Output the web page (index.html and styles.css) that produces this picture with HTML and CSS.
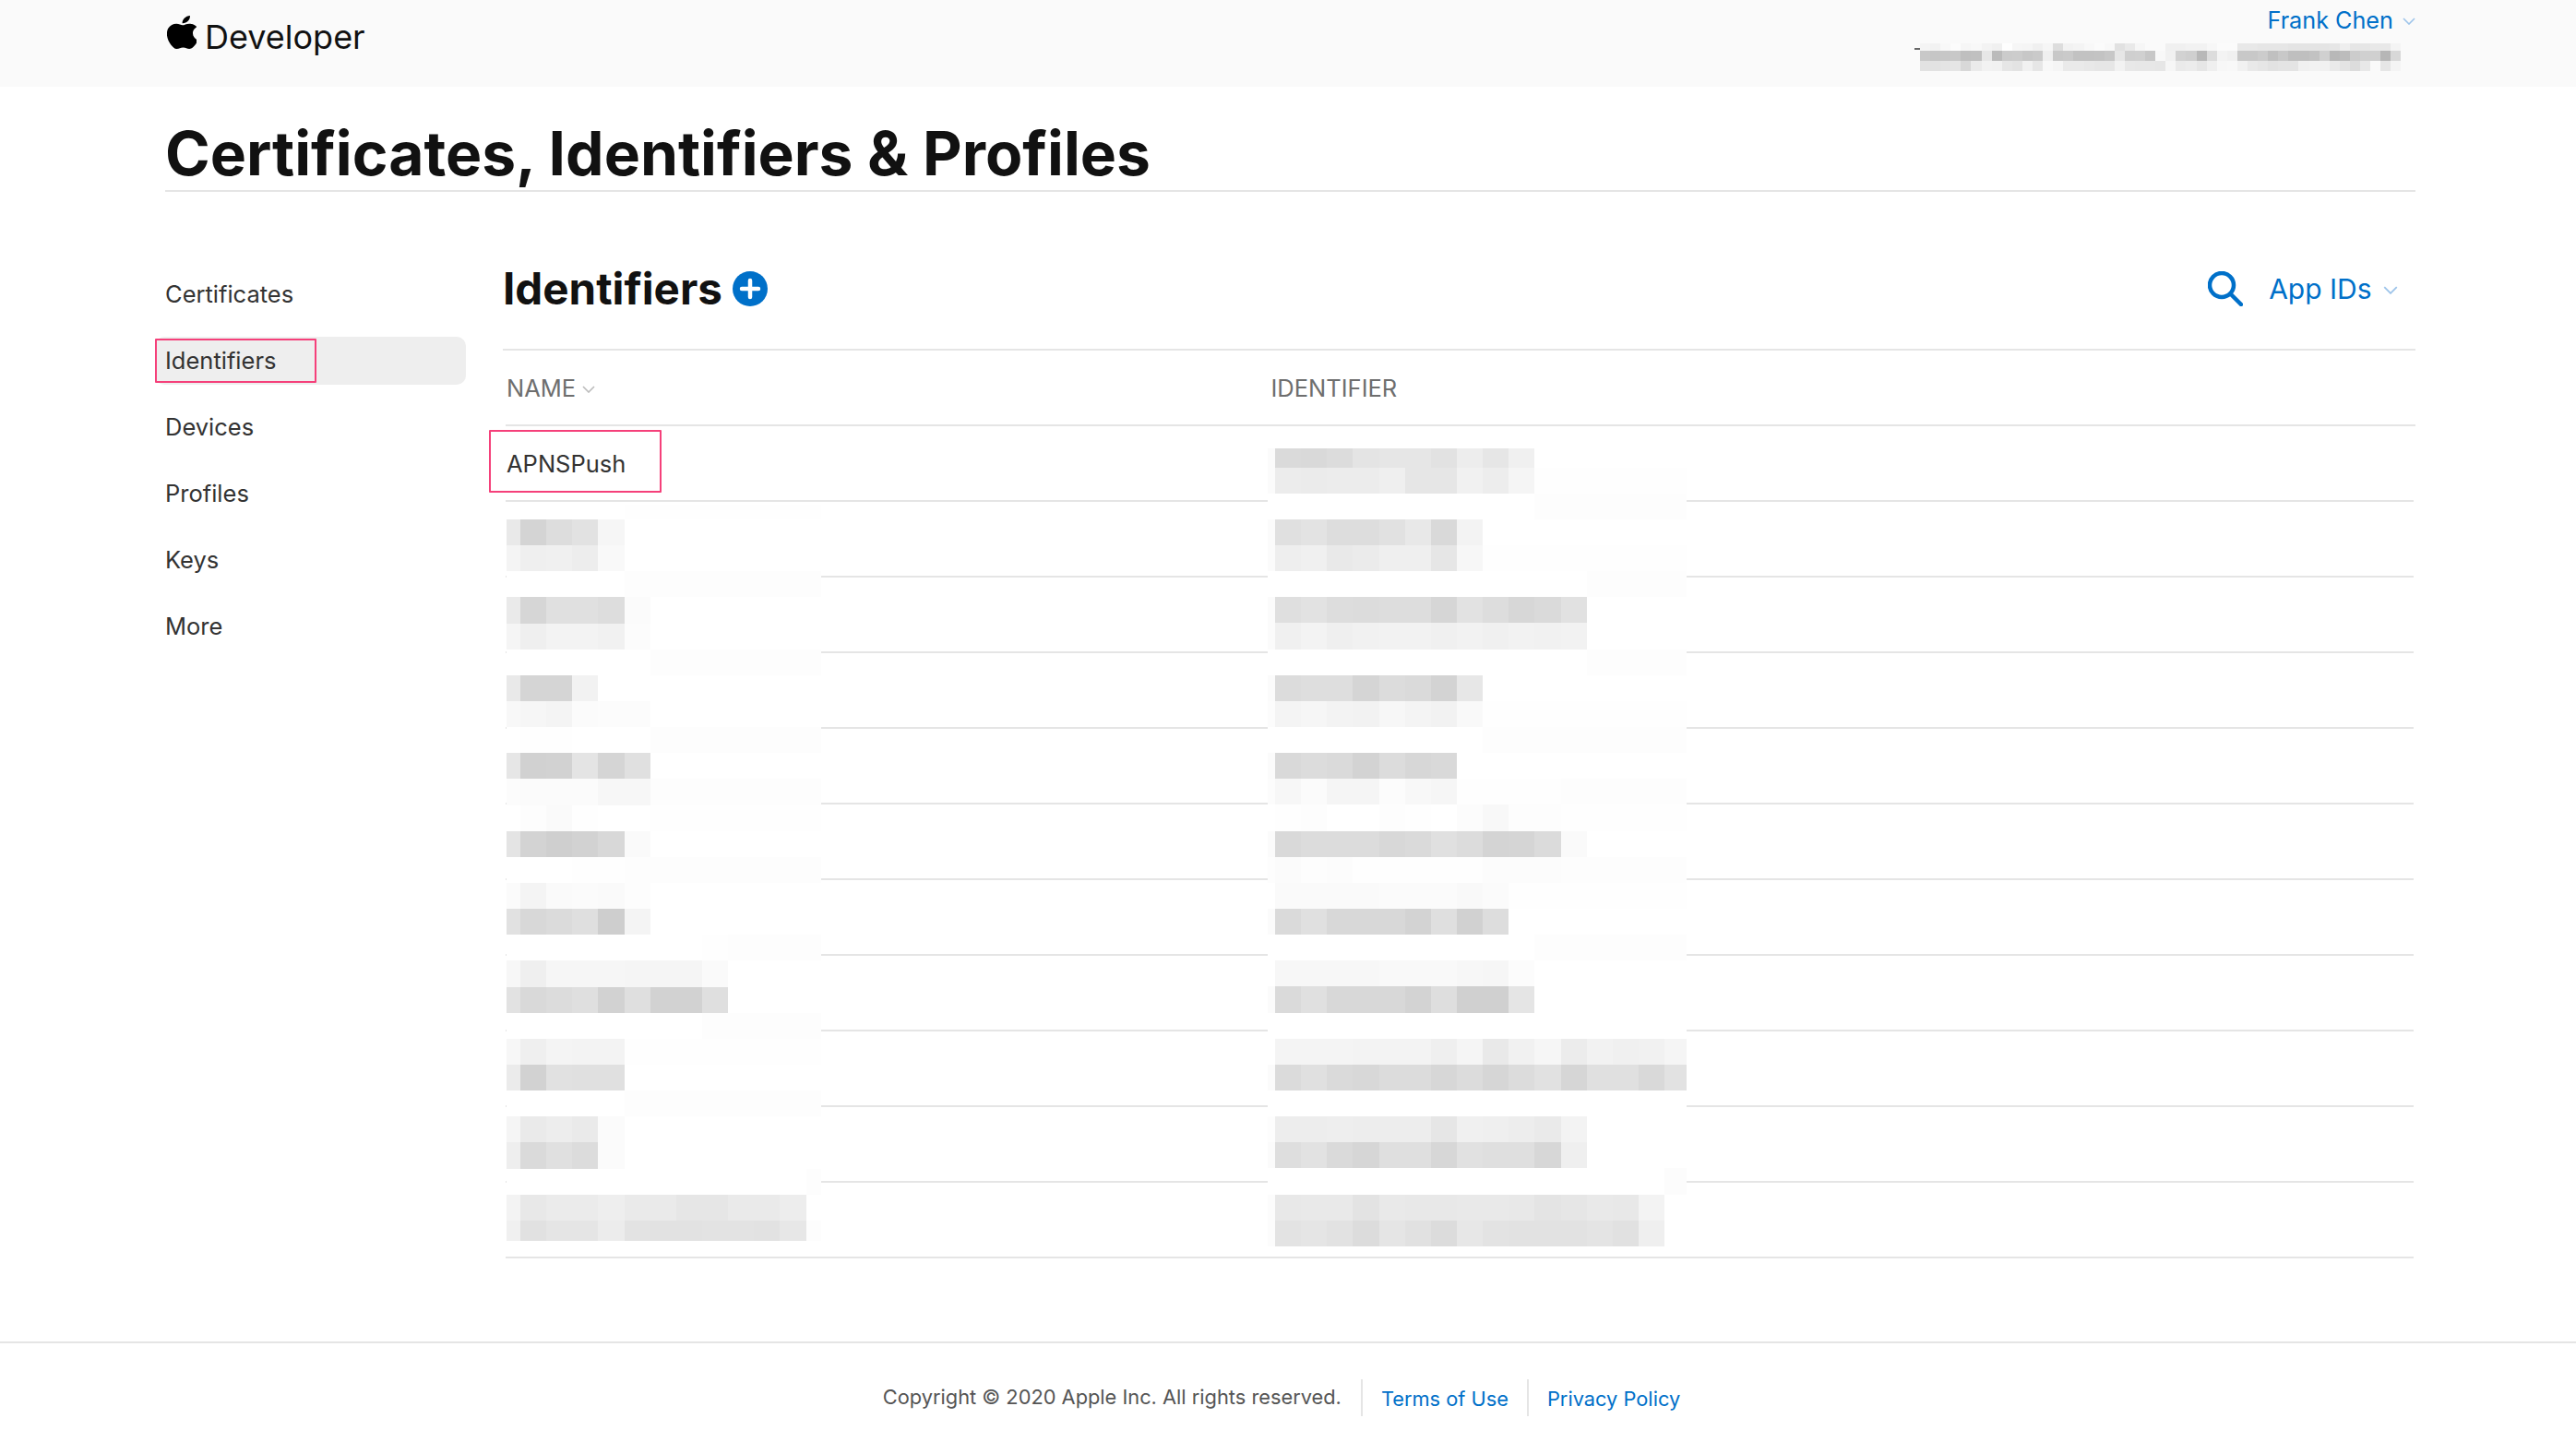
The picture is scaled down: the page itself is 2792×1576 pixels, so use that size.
FILE: index.html
```html
<!DOCTYPE html>
<html lang="en">
<head>
  <meta charset="UTF-8">
  <title>Certificates, Identifiers &amp; Profiles - Apple Developer</title>
  <link rel="stylesheet" href="styles.css">
</head>
<body>
  <header class="topbar">
    <a class="brand">
      <svg class="apple" viewBox="2.3 0 18.6 24" preserveAspectRatio="none"><path d="M12.152 6.896c-.948 0-2.415-1.078-3.96-1.04-2.04.027-3.91 1.183-4.961 3.014-2.117 3.675-.546 9.103 1.519 12.09 1.013 1.454 2.208 3.09 3.792 3.039 1.52-.065 2.09-.987 3.935-.987 1.831 0 2.35.987 3.96.948 1.637-.026 2.676-1.48 3.676-2.948 1.156-1.688 1.636-3.325 1.662-3.415-.039-.013-3.182-1.221-3.22-4.857-.026-3.04 2.48-4.494 2.597-4.559-1.429-2.09-3.623-2.324-4.39-2.376-2-.156-3.675 1.09-4.61 1.09zM15.53 3.83c.843-1.012 1.4-2.427 1.245-3.83-1.207.052-2.662.805-3.532 1.818-.78.896-1.454 2.338-1.273 3.714 1.338.104 2.715-.688 3.559-1.701"/></svg>
      <span>Developer</span>
    </a>
    <div class="account">
      <a class="account-name">Frank Chen <svg class="chevron" viewBox="0 0 14 8"><path d="M1 1l6 6 6-6"/></svg></a>
      <div class="org" id="org"><i class="org-tick"></i></div>
    </div>
  </header>

  <div class="page">
    <h1>Certificates, Identifiers &amp; Profiles</h1>

    <div class="columns">
      <nav class="sidebar">
        <a class="nav-item">Certificates</a>
        <a class="nav-item active">Identifiers<i class="mark mark-nav"></i></a>
        <a class="nav-item">Devices</a>
        <a class="nav-item">Profiles</a>
        <a class="nav-item">Keys</a>
        <a class="nav-item">More</a>
      </nav>

      <section class="main">
        <div class="main-head">
          <h2>Identifiers</h2>
          <svg class="add" viewBox="0 0 38 38"><circle cx="19" cy="19" r="19"/><path d="M19 10v18M10 19h18"/></svg>
          <div class="main-tools">
            <svg class="search" viewBox="0 0 38 38"><circle cx="15" cy="15" r="13"/><path d="M24.5 24.5L36 36"/></svg>
            <a class="filter">App IDs <svg class="chevron" viewBox="0 0 14 8"><path d="M1 1l6 6 6-6"/></svg></a>
          </div>
        </div>

        <div class="table">
          <div class="row head">
            <div>NAME <svg class="chevron sort" viewBox="0 0 14 8"><path d="M1 1l6 6 6-6"/></svg></div>
            <div>IDENTIFIER</div>
          </div>
          <div class="row"><div class="first-name">APNSPush<i class="mark mark-row"></i></div></div>
          <div class="row"></div>
          <div class="row"></div>
          <div class="row"></div>
          <div class="row"></div>
          <div class="row"></div>
          <div class="row"></div>
          <div class="row"></div>
          <div class="row"></div>
          <div class="row"></div>
          <div class="row"></div>

          <div class="mosaic mosaic-name" id="names"></div>
          <div class="mosaic mosaic-ident" id="idents"></div>
        </div>
      </section>
    </div>
  </div>

  <footer class="footer">
    <span class="copyright">Copyright © 2020 Apple Inc. All rights reserved.</span>
    <a class="foot-link">Terms of Use</a>
    <a class="foot-link">Privacy Policy</a>
  </footer>

  <script src="script.js"></script>
</body>
</html>
```

FILE: styles.css
```css
* {
  box-sizing: border-box;
}
body {
  margin: 0;
  height: 1576px;
  overflow: hidden;
  background: #fff;
  color: #333;
  font-family: Inter, "Liberation Sans", sans-serif;
  font-size: 25.5px;
}
h1, h2 {
  margin: 0;
  color: #111;
}
i {
  display: block;
}

/* top bar */
.topbar {
  display: flex;
  justify-content: space-between;
  height: 94px;
  padding: 0 174px 0 181px;
  background: #fafafa;
}
.brand {
  display: flex;
  align-items: flex-start;
  gap: 9px;
  color: #111;
  font-size: 36px;
}
.brand span {
  margin-top: 18px;
}
.apple {
  width: 32px;
  height: 36px;
  margin-top: 17px;
  fill: #000;
}
.account {
  display: flex;
  flex-direction: column;
  align-items: flex-end;
  width: 537px;
}
.account-name {
  height: 47px;
  padding-top: 7px;
  color: #0070c9;
  font-size: 25.2px;
  line-height: 30px;
}
.chevron {
  width: 14px;
  height: 8px;
  margin-left: 3px;
  vertical-align: 4px;
  fill: none;
  stroke: #9dc4ea;
  stroke-width: 1.6;
}
.org {
  position: relative;
  width: 522px;
  margin-right: 15px;
}
.org-tick {
  position: absolute;
  left: -6px;
  top: 5px;
  width: 6px;
  height: 2px;
  background: #666;
}

/* page title */
.page {
  padding: 0 174px 0 168px;
}
h1 {
  height: 114px;
  margin-left: 11px;
  padding: 32px 0 0 0;
  border-bottom: 2px solid #e5e5e5;
  font-size: 65.9px;
  font-weight: 700;
  line-height: 80px;
}
.columns {
  display: flex;
  gap: 40px;
}

/* side nav */
.sidebar {
  display: flex;
  flex-direction: column;
  gap: 20px;
  flex: 0 0 337px;
  padding-top: 85px;
}
.nav-item {
  position: relative;
  height: 52px;
  padding-left: 11px;
  border-radius: 10px;
  line-height: 52px;
}
.active {
  background: #eee;
}
.mark {
  position: absolute;
  border: 2px solid #f5407a;
  border-radius: 1px;
}
.mark-nav {
  left: 0;
  top: 2px;
  width: 175px;
  height: 48px;
}
.mark-row {
  left: -18px;
  top: -21px;
  width: 187px;
  height: 68px;
}

/* identifiers */
.main {
  flex: 1;
}
.main-head {
  display: flex;
  align-items: center;
  gap: 11px;
  height: 172px;
  padding-top: 39px;
  border-bottom: 2px solid #e5e5e5;
}
h2 {
  font-size: 47.5px;
  font-weight: 700;
}
.add {
  width: 38px;
  height: 38px;
}
.add circle {
  fill: #0070c9;
}
.add path {
  fill: none;
  stroke: #fff;
  stroke-width: 4.5;
  stroke-linecap: round;
}
.main-tools {
  display: flex;
  align-items: center;
  gap: 28px;
  margin-left: auto;
  padding-right: 18px;
  color: #0070c9;
  font-size: 30px;
}
.search {
  width: 38px;
  height: 38px;
  fill: none;
  stroke: #0070c9;
  stroke-width: 4.5;
  stroke-linecap: round;
}
.filter .chevron {
  width: 18px;
  height: 9px;
  margin-left: 3px;
  vertical-align: 5px;
}

.table {
  position: relative;
}
.row {
  display: grid;
  grid-template-columns: 829.5px 1fr;
  align-items: center;
  height: 82px;
  margin: 0 2px 0 3px;
  border-bottom: 2px solid #e5e5e5;
}
.head {
  margin-right: 0;
  color: #6e6e6e;
}
.head div:first-child, .first-name {
  padding-left: 1px;
}
.first-name {
  position: relative;
}
.sort {
  margin-left: 0;
  stroke: #bbb;
}

/* blurred out rows */
.mosaic {
  position: absolute;
  overflow: hidden;
  background: #fff;
}
.mosaic-name {
  left: 4px;
  top: 167px;
  width: 341px;
  height: 798px;
}
.mosaic-ident {
  left: 829px;
  top: 106px;
  width: 454px;
  height: 865px;
}
.band {
  display: flex;
  height: 28.15px;
}
.cell {
  flex: 0 0 28.15px;
}
.cell:last-child {
  flex: 1;
}
.mosaic-name .cell:first-child {
  flex-basis: 15px;
}
.mosaic-ident .cell:first-child {
  flex-basis: 8px;
}
.mosaic-name .band:first-child {
  height: 16px;
}
.mosaic-ident .band:first-child {
  height: 20.6px;
}
.org .band {
  height: 11px;
}
.org .band:nth-child(2) {
  height: 8px;
}
.org .cell {
  flex-basis: 11.1px;
}

/* footer */
.footer {
  display: flex;
  justify-content: center;
  align-items: center;
  height: 122px;
  margin-top: 90px;
  padding: 0 0 4px 6px;
  border-top: 2px solid #e5e5e5;
  font-size: 21.8px;
}
.copyright {
  padding-right: 21px;
  color: #555;
}
.foot-link {
  height: 40px;
  margin-top: 2px;
  padding: 0 20px;
  border-left: 2px solid #e5e5e5;
  color: #0070c9;
  line-height: 42px;
}
```

FILE: script.js
```js
// gray levels of the blurred areas, one string per band
// the last value of a band fills what is left of the width, "ff*5" repeats
const names = [
  'ff*5 fe',
  'e9 d4 dd e2 f6 ff',
  'f4 ef f0 ed f9 ff',
  'ff*5 fd',
  'ea d6 e0 e0 dd fb ff',
  'f5 ef f3 f3 f1 fc ff',
  'ff*6 fd',
  'e9 d5 d5 f2 ff',
  'f8 f6 f4 fb fc fc ff',
  'ff fe fe ff*3 fd',
  'e6 d1 d2 e4 d5 e0 ff',
  'fc fb fb fb f7 f7 fd',
  'ff fd fa fe ff ff fe',
  'e4 d3 cf d2 d8 fa ff',
  'ff*3 fe fe fd',
  'fb f4 fa fb fa fd ff',
  'e1 d8 db df ce f4 ff',
  'ff*8 fe fd',
  'f7 ef f6 f6 f6 f5 f5 f5 fa ff',
  'e2 d9 dc df d2 df d2 d2 df ff',
  'ff*8 fd',
  'f7 ef f4 f3 f3 fe',
  'eb d2 e1 e0 e0 ff',
  'ff*5 fd',
  'f5 ea ed ea fb ff',
  'ee da e0 dc fb ff',
  'ff*12 fd',
  'f3 e8 eb eb ee ea ea e6 e6 ea ea ed ff',
  'f0 e1 e5 e5 ec e3 e2 e2 e3 e3 e2 e7 fd'
];

const idents = [
  'fb da d9 dc e4 e6 e6 e2 ed e6 f0 ff',
  'fb ec eb ec ec ef e6 e6 f1 ed f5 fe',
  'ff*11 fd',
  'fb e0 e3 dd dd e1 e8 d9 f3 ff',
  'fb ee f0 e9 eb ef ef e6 f7 fe',
  'ff*13 fd',
  'fb df e2 dd dc dd dd d6 e2 dd d7 da e1 ff',
  'fb f0 f3 ef f1 f2 f2 f0 f2 f0 f2 f1 f2 ff',
  'ff*13 fd',
  'fb dc de de d5 dc da d3 e7 ff',
  'fc f4 f6 f3 f2 f7 f4 f2 f9 fe',
  'ff*9 fd',
  'fb d9 dc da d3 dc d7 d9 ff',
  'fc f7 fb f5 f5 fc f8 f6 fe*4 fd',
  'ff fe fd ff ff fd fe ff fc f8 fd fd fe',
  'fb d9 dc dc dc d8 da e0 dc d4 d5 db fa ff',
  'fd fb fd fc fe*5 fc fc fc fd',
  'ff fa fa fa fa fb fb fb f9 fb fe',
  'fb da e0 d8 d8 d8 d3 df d1 dd ff',
  'ff*11 fd',
  'ff f7 f7 f7 f7 f9 f9 f9 f7 f6 fc ff',
  'fb da e0 d8 d8 d8 d3 de d0 d0 e5 ff',
  'ff',
  'ff f4 f4 f4 f3 f3 f3 ef f5 e9 f1 f6 ec f2 f0 f1 f5 ff',
  'fb db e0 da d8 dc dc d7 dc d6 dc e1 d6 e0 e0 d9 e2 ff',
  'ff',
  'fd ed ed ee ed ed ed e6 f0 ef ed ea f3 ff',
  'fb de e2 da d6 df df d7 e1 df df d7 ef ff',
  'ff*16 fc',
  'fc e8 e9 e9 e3 e9 e8 e8 e9 e9 e8 e4 e6 e9 e8 f3 ff',
  'fc e3 e5 e2 dc e5 e1 dc e7 e3 e2 e2 e2 e4 e1 ef ff'
];

const org = [
  'f4 f2 f8 fc f6 f8 f3 f0 fe f6 f5 f0 f6 dd f2 f4 f8 fb f8 e1 e9 f6 fa fa f0 f0 f2 f2 f7 fb fb e8 e8 e6 e6 e6 e4 e4 e4 e4 e6 ee e6 e6 e8 e8 f4 fa',
  'c8 c6 c7 c8 bf c0 e7 bb cb cc c7 ca ef c8 ca c2 c2 c3 c7 e6 cf d0 c7 f8 f1 d2 cf b8 dc f3 f0 c8 c8 cc c0 c8 bf bf c2 d0 b8 bc cc d0 d0 b6 d8 fa',
  'e2 e2 e4 e5 d8 eb f2 f1 e6 e3 f1 e6 f8 f5 ea ea e8 e6 e6 f2 e8 e7 e7 e6 f6 ea ec e6 ef f7 f8 f1 e9 e6 e2 e4 e4 f0 f2 f1 ea e4 dc e8 fa e6 f4 fa'
];

function fill(el, bands) {
  bands.forEach(band => {
    const row = document.createElement('div');
    row.className = 'band';
    band.split(' ').forEach(token => {
      const [gray, times] = token.split('*');
      for (let i = 0; i < (times || 1); i++) {
        const cell = document.createElement('span');
        cell.className = 'cell';
        cell.style.background = '#' + gray + gray + gray;
        row.appendChild(cell);
      }
    });
    el.appendChild(row);
  });
}

fill(document.getElementById('names'), names);
fill(document.getElementById('idents'), idents);
fill(document.getElementById('org'), org);
```
